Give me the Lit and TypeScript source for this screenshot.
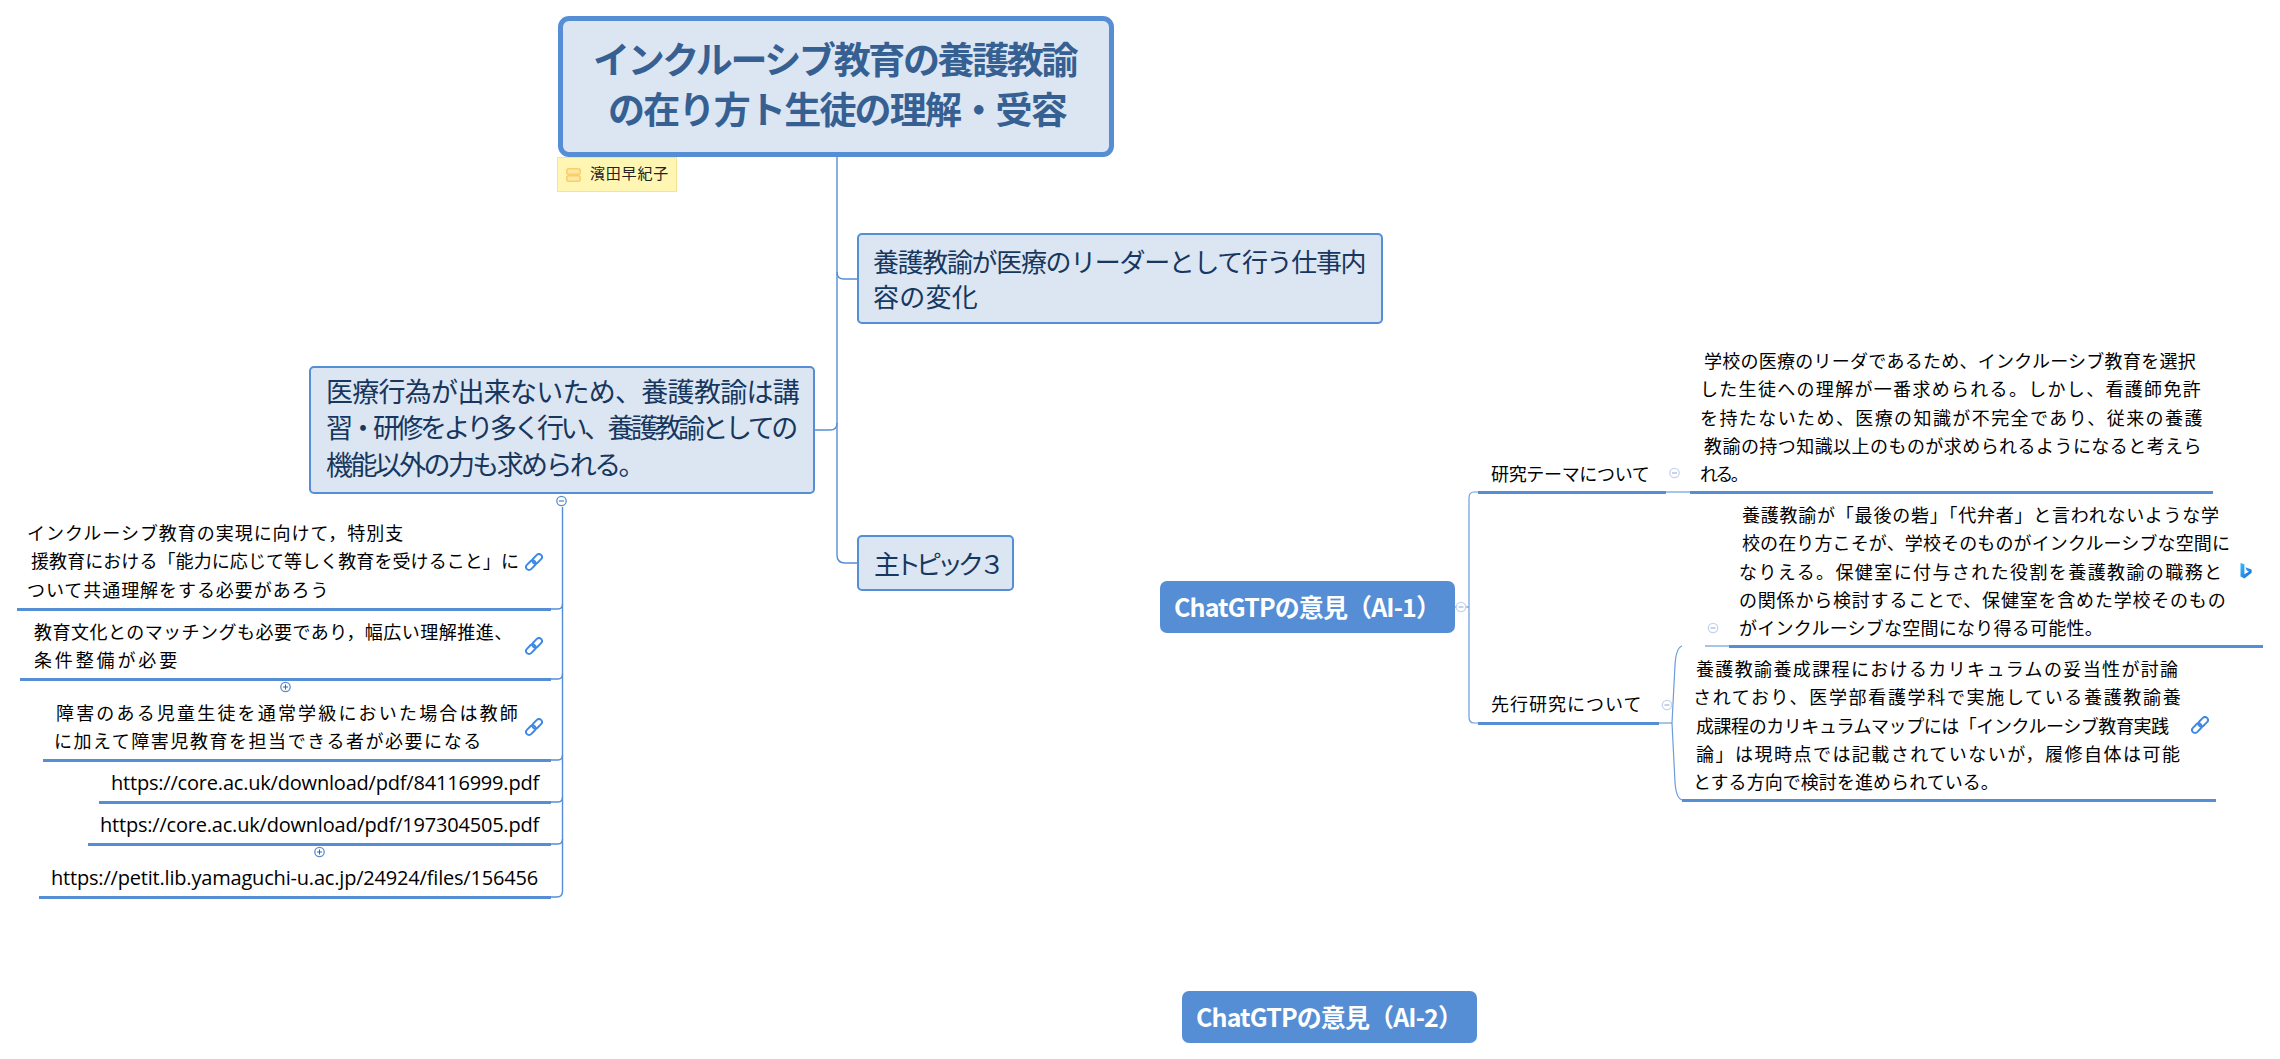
import { LitElement, css, html, svg } from 'lit'
import { customElement } from 'lit/decorators.js'
import { styleMap } from 'lit/directives/style-map.js'

const JP = '"Noto Sans CJK JP", "Noto Sans", sans-serif'
const LATIN = '"Open Sans", "Noto Sans", sans-serif'

type Kind = 'root' | 'topic' | 'wide' | 'ai' | 'note' | 'item' | 'url' | 'label' | 'detail'

// font string is needed to measure text, border for the offset of the text box
const KINDS: Record<Kind, { font: string; lh: number; border: number }> = {
  root: { font: `700 37px ${JP}`, lh: 50, border: 5 },
  topic: { font: `400 26px ${JP}`, lh: 35, border: 2 },
  wide: { font: `400 27px ${JP}`, lh: 36.5, border: 2 },
  ai: { font: `700 25px ${JP}`, lh: 34, border: 0 },
  note: { font: `400 15px ${JP}`, lh: 20, border: 1 },
  item: { font: `400 18px ${JP}`, lh: 28.5, border: 0 },
  url: { font: `400 20px ${LATIN}`, lh: 28, border: 0 },
  label: { font: `400 18px ${JP}`, lh: 28, border: 0 },
  detail: { font: `400 18px ${JP}`, lh: 28.3, border: 0 },
}

interface Line {
  text: string
  from: number
  to: number
}

interface MapNode {
  kind: Kind
  x: number
  y: number
  w: number
  h: number
  first: number // centre of first text line
  lines: Line[]
}

const l = (text: string, from: number, to: number): Line => ({ text, from, to })

const NODES: MapNode[] = [
  {
    kind: 'root', x: 558, y: 16, w: 556, h: 141, first: 58,
    lines: [l('インクルーシブ教育の養護教諭', 593, 1078), l('の在り方ト生徒の理解・受容', 608, 1066)],
  },
  { kind: 'note', x: 557, y: 157, w: 120, h: 35, first: 173, lines: [l('濱田早紀子', 590, 669)] },
  {
    kind: 'topic', x: 857, y: 233, w: 526, h: 91, first: 260,
    lines: [l('養護教諭が医療のリーダーとして行う仕事内', 873, 1366), l('容の変化', 873, 978)],
  },
  {
    kind: 'wide', x: 309, y: 366, w: 506, h: 128, first: 391,
    lines: [
      l('医療行為が出来ないため、養護教諭は講', 326, 799),
      l('習・研修をより多く行い、養護教諭としての', 326, 796),
      l('機能以外の力も求められる。', 326, 643),
    ],
  },
  { kind: 'topic', x: 857, y: 535, w: 157, h: 56, first: 562, lines: [l('主トピック３', 874, 1000)] },

  {
    kind: 'item', x: 17, y: 515, w: 534, h: 96, first: 532,
    lines: [
      l('インクルーシブ教育の実現に向けて，特別支', 27, 405),
      l('援教育における「能力に応じて等しく教育を受けること」に', 31, 519),
      l('ついて共通理解をする必要があろう', 27, 330),
    ],
  },
  {
    kind: 'item', x: 20, y: 614, w: 531, h: 67, first: 631,
    lines: [l('教育文化とのマッチングも必要であり，幅広い理解推進、', 34, 513), l('条件整備が必要', 34, 180)],
  },
  {
    kind: 'item', x: 43, y: 695, w: 508, h: 67, first: 712,
    lines: [l('障害のある児童生徒を通常学級においた場合は教師', 56, 520), l('に加えて障害児教育を担当できる者が必要になる', 54, 484)],
  },
  { kind: 'url', x: 99, y: 768, w: 452, h: 36, first: 783, lines: [l('https://core.ac.uk/download/pdf/84116999.pdf', 111, 539)] },
  { kind: 'url', x: 88, y: 810, w: 463, h: 36, first: 825, lines: [l('https://core.ac.uk/download/pdf/197304505.pdf', 100, 539)] },
  { kind: 'url', x: 39, y: 863, w: 512, h: 36, first: 878, lines: [l('https://petit.lib.yamaguchi-u.ac.jp/24924/files/156456', 51, 538)] },

  { kind: 'ai', x: 1160, y: 581, w: 295, h: 52, first: 606, lines: [l('ChatGTPの意見（AI-1）', 1174, 1440)] },
  { kind: 'ai', x: 1182, y: 991, w: 295, h: 52, first: 1016, lines: [l('ChatGTPの意見（AI-2）', 1196, 1462)] },

  { kind: 'label', x: 1478, y: 458, w: 188, h: 36, first: 473, lines: [l('研究テーマについて', 1491, 1650)] },
  { kind: 'label', x: 1478, y: 688, w: 181, h: 37, first: 703, lines: [l('先行研究について', 1491, 1643)] },
  {
    kind: 'detail', x: 1690, y: 346, w: 523, h: 148, first: 360,
    lines: [
      l('学校の医療のリーダであるため、インクルーシブ教育を選択', 1704, 2197),
      l('した生徒への理解が一番求められる。しかし、看護師免許', 1700, 2202),
      l('を持たないため、医療の知識が不完全であり、従来の養護', 1700, 2204),
      l('教諭の持つ知識以上のものが求められるようになると考えら', 1704, 2202),
      l('れる。', 1700, 1746),
    ],
  },
  {
    kind: 'detail', x: 1729, y: 500, w: 534, h: 148, first: 514,
    lines: [
      l('養護教諭が「最後の砦」「代弁者」と言われないような学', 1742, 2221),
      l('校の在り方こそが、学校そのものがインクルーシブな空間に', 1742, 2231),
      l('なりえる。保健室に付与された役割を養護教諭の職務と', 1739, 2224),
      l('の関係から検討することで、保健室を含めた学校そのもの', 1739, 2227),
      l('がインクルーシブな空間になり得る可能性。', 1739, 2104),
    ],
  },
  {
    kind: 'detail', x: 1682, y: 654, w: 534, h: 148, first: 668,
    lines: [
      l('養護教諭養成課程におけるカリキュラムの妥当性が討論', 1696, 2180),
      l('されており、医学部看護学科で実施している養護教諭養', 1693, 2184),
      l('成課程のカリキュラムマップには「インクルーシブ教育実践', 1696, 2170),
      l('論」は現時点では記載されていないが，履修自体は可能', 1696, 2182),
      l('とする方向で検討を進められている。', 1693, 2000),
    ],
  },
]

const LINK_ICONS = [
  [534, 562],
  [534, 646],
  [534, 727],
  [2200, 725],
]

// thin connectors, rounded where they meet the trunk
const STRONG = [
  'M837 157V555Q837 563 845 563H857',
  'M837 272Q837 279 844 279H857',
  'M815 430H830Q837 430 837 423',
  'M562.5 507V891Q562.5 897 557 897H551',
  'M551 609H558Q562.5 609 562.5 604',
  'M551 679H558Q562.5 679 562.5 674',
  'M551 760H558Q562.5 760 562.5 755',
  'M551 802H558Q562.5 802 562.5 797',
  'M551 844H558Q562.5 844 562.5 839',
]

const SOFT = [
  'M1455 607H1469',
  'M1478 492H1474Q1469 492 1469 498V717Q1469 723 1474 723H1478',
  'M1666 492H1690',
  'M1658 723H1672',
  'M1682 646Q1676 648 1675 665L1672 723L1675 782Q1676 798 1682 800',
  'M1705 646H1729',
]

const CIRCLES: [number, number, 'minus' | 'plus', boolean][] = [
  [561.5, 501, 'minus', false],
  [285.5, 687, 'plus', false],
  [319.5, 852, 'plus', false],
  [1461, 607, 'minus', true],
  [1674.5, 473, 'minus', true],
  [1667, 705, 'minus', true],
  [1713, 628, 'minus', true],
]

const ctx = document.createElement('canvas').getContext('2d')!

function spacing(line: Line, kind: Kind) {
  ctx.font = KINDS[kind].font
  const count = [...line.text].length
  return (line.to - line.from - ctx.measureText(line.text).width) / count
}

@customElement('app-root')
export class AppRoot extends LitElement {
  static styles = css`
    :host {
      display: block;
      width: 2280px;
      height: 1059px;
      background: #fff;
      overflow: hidden;
    }

    .canvas {
      position: relative;
      width: 2280px;
      height: 1059px;
      font-family: 'Noto Sans CJK JP', 'Noto Sans', sans-serif;
      color: #000;
    }

    .wires {
      position: absolute;
      inset: 0;
    }

    .node {
      position: absolute;
      box-sizing: border-box;
    }

    .line {
      white-space: nowrap;
    }

    .root {
      border: 5px solid #558ed5;
      border-radius: 11px;
      background: #dce6f2;
      color: #366092;
      font-size: 37px;
      font-weight: 700;
      line-height: 50px;
    }

    .topic,
    .wide {
      border: 2px solid #558ed5;
      border-radius: 5px;
      background: #dce6f2;
      color: #17375e;
    }

    .topic {
      font-size: 26px;
      line-height: 35px;
    }

    .wide {
      font-size: 27px;
      line-height: 36.5px;
    }

    .ai {
      border-radius: 7px;
      background: #558ed5;
      color: #fff;
      font-size: 25px;
      font-weight: 700;
      line-height: 34px;
    }

    .note {
      border: 1px solid #f7e391;
      background: #fff6b4;
      color: #222;
      font-size: 15px;
      line-height: 20px;
    }

    .item,
    .url,
    .label,
    .detail {
      border-bottom: 3px solid #558ed5;
      font-size: 18px;
    }

    .item {
      line-height: 28.5px;
    }

    .url {
      font-family: 'Open Sans', 'Noto Sans', sans-serif;
      font-size: 20px;
      line-height: 28px;
    }

    .label {
      line-height: 28px;
    }

    .detail {
      line-height: 28.3px;
    }

    .glyph {
      position: absolute;
      display: block;
    }
  `

  private renderNode(node: MapNode) {
    const { lh, border } = KINDS[node.kind]
    const styles = {
      left: `${node.x}px`,
      top: `${node.y}px`,
      width: `${node.w}px`,
      height: `${node.h}px`,
      paddingTop: `${node.first - node.y - lh / 2 - border}px`,
    }
    return html`
      <div class="node ${node.kind}" style=${styleMap(styles)}>
        ${node.lines.map(
          (line) => html`
            <div
              class="line"
              style=${styleMap({
                marginLeft: `${line.from - node.x - border}px`,
                letterSpacing: `${spacing(line, node.kind)}px`,
              })}
            >
              ${line.text}
            </div>
          `,
        )}
      </div>
    `
  }

  private renderLink([x, y]: number[]) {
    return html`
      <svg
        class="glyph"
        style=${styleMap({ left: `${x - 9}px`, top: `${y - 9}px` })}
        width="18"
        height="18"
        viewBox="0 0 18 18"
        fill="none"
        stroke="#3d87e6"
        stroke-width="1.9"
      >
        <g transform="rotate(-45 9 9)">
          <rect x="-1" y="6" width="11" height="6" rx="3" />
          <rect x="8" y="6" width="11" height="6" rx="3" />
        </g>
      </svg>
    `
  }

  render() {
    return html`
      <div class="canvas">
        <svg class="wires" width="2280" height="1059" fill="none">
          ${STRONG.map((d) => svg`<path d=${d} stroke="#558ed5" stroke-width="1.4" />`)}
          ${SOFT.map((d) => svg`<path d=${d} stroke="#6b9cdb" stroke-width="1.2" />`)}
          ${CIRCLES.map(([x, y, type, pale]) => {
            const color = pale ? '#c5d4ee' : '#558ed5'
            const mark = pale ? '#8fa6d0' : '#44618f'
            return svg`
              <circle cx=${x} cy=${y} r="4.7" fill="#fff" stroke=${color} stroke-width="1.3" />
              <path d="M${x - 2.5} ${y}H${x + 2.5}" stroke=${mark} />
              ${type === 'plus' ? svg`<path d="M${x} ${y - 2.5}V${y + 2.5}" stroke=${mark} />` : null}
            `
          })}
        </svg>
        ${NODES.map((node) => this.renderNode(node))}
        <svg class="glyph note-icon" style="left:566px;top:168px" width="15" height="14" viewBox="0 0 15 14">
          <rect x="0.8" y="0.8" width="13.4" height="5.4" rx="2" fill="#fde7a4" stroke="#fbcf68" stroke-width="1.6" />
          <rect x="0.8" y="7.8" width="13.4" height="5.4" rx="2" fill="#fde7a4" stroke="#fbcf68" stroke-width="1.6" />
        </svg>
        ${LINK_ICONS.map((point) => this.renderLink(point))}
        <svg class="glyph bing" style="left:2240px;top:563px" width="12" height="16" viewBox="0 0 12 16">
          <defs>
            <linearGradient id="bing" x1="0" y1="0" x2="1" y2="1">
              <stop offset="0" stop-color="#37bdff" />
              <stop offset="1" stop-color="#1f63d8" />
            </linearGradient>
          </defs>
          <path
            d="M0.5 0L4.4 1.3V11.2L9 8.6L6.8 7.6L5.4 4.3L11.6 6.4V9.7L4.4 15.6L0.5 13.5Z"
            fill="url(#bing)"
          />
        </svg>
      </div>
    `
  }
}
